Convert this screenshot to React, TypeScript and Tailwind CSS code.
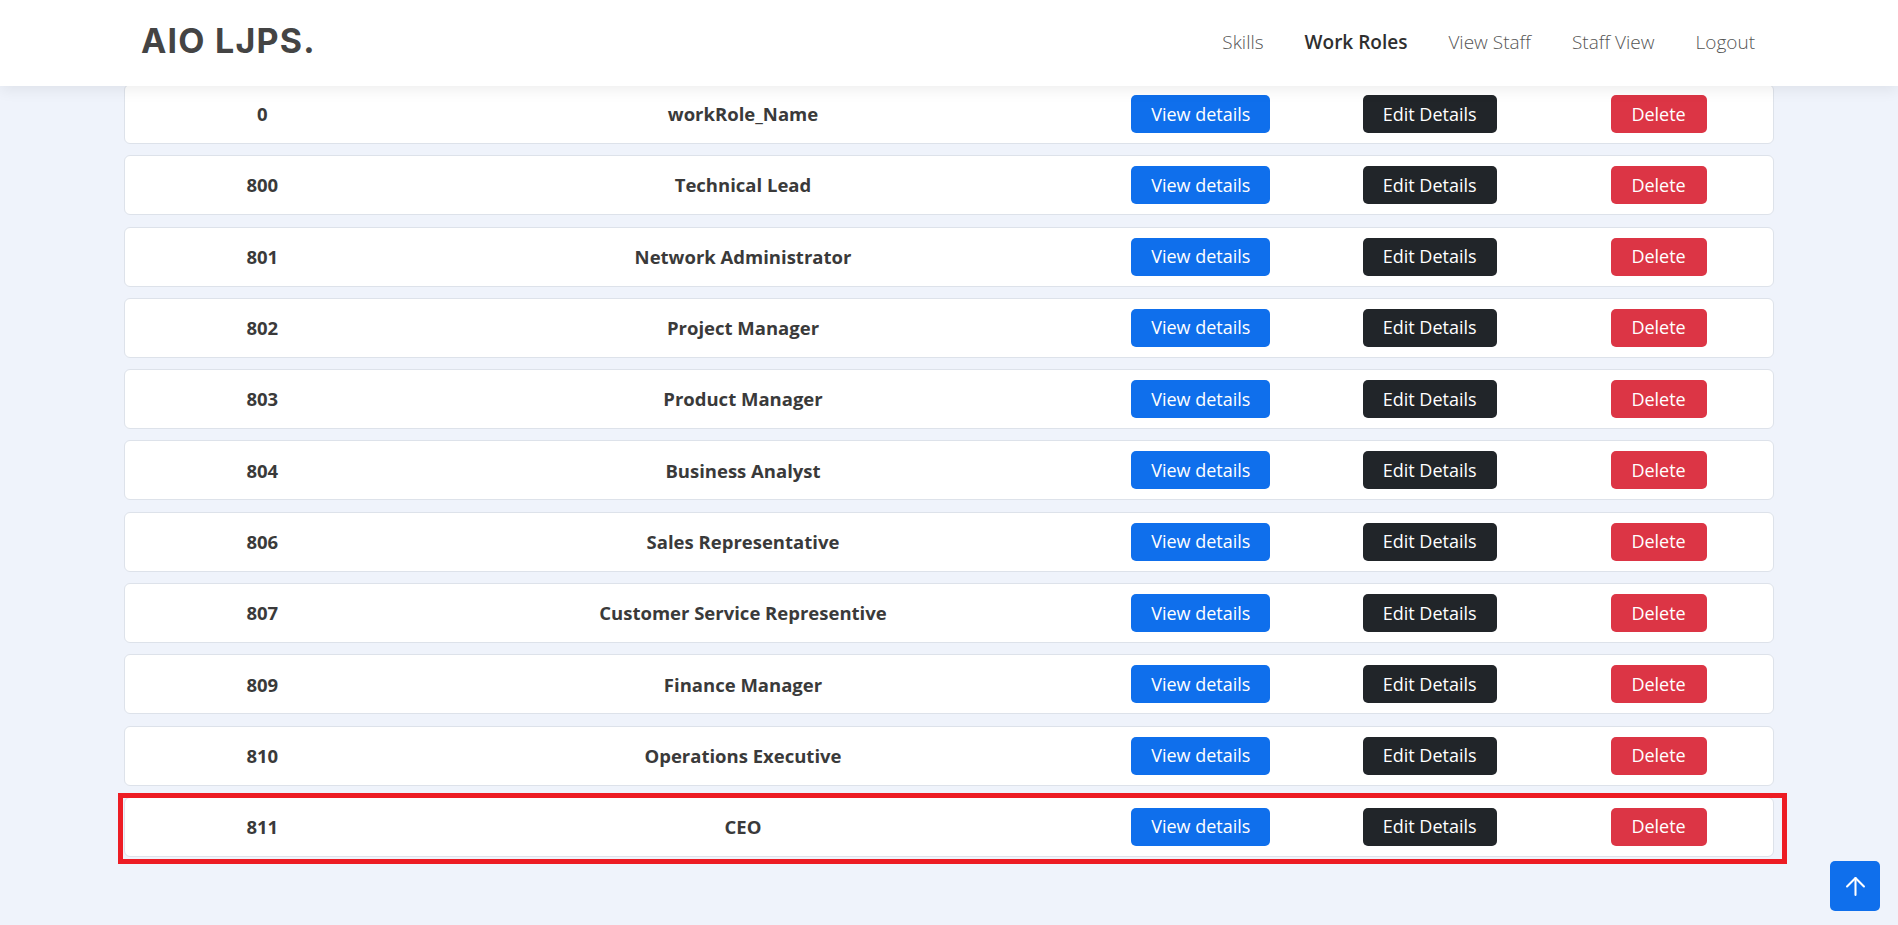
import { ArrowUp } from "lucide-react";

type WorkRole = {
  id: number;
  name: string;
};

const roles: WorkRole[] = [
  { id: 0, name: "workRole_Name" },
  { id: 800, name: "Technical Lead" },
  { id: 801, name: "Network Administrator" },
  { id: 802, name: "Project Manager" },
  { id: 803, name: "Product Manager" },
  { id: 804, name: "Business Analyst" },
  { id: 806, name: "Sales Representative" },
  { id: 807, name: "Customer Service Representive" },
  { id: 809, name: "Finance Manager" },
  { id: 810, name: "Operations Executive" },
  { id: 811, name: "CEO" },
];

const navLinks = ["Skills", "Work Roles", "View Staff", "Staff View", "Logout"];

function Header() {
  return (
    <header className="relative z-10 flex h-[86px] items-center justify-between bg-white pl-[141px] pr-[143px] shadow-[0_4px_14px_rgba(0,0,0,0.07)]">
      <div className="pb-[5px] font-['Inter',sans-serif] text-[34px] font-bold tracking-[1.2px] text-[#444]">
        AIO LJPS.
      </div>
      <nav className="flex items-center gap-[41px] pb-[2px] font-['Open_Sans',sans-serif] text-[19px]">
        {navLinks.map((link) => (
          <a
            key={link}
            className={
              link === "Work Roles"
                ? "font-semibold text-[#2f2f2f]"
                : "font-light text-[#555]"
            }
          >
            {link}
          </a>
        ))}
      </nav>
    </header>
  );
}

function RoleRow({ role, highlighted }: { role: WorkRole; highlighted: boolean }) {
  return (
    <div className="relative">
      <div className="grid h-[60px] grid-cols-[6fr_15fr_5fr_5fr_5fr] items-center rounded-md border border-[#dde2ea] bg-white text-center font-['Open_Sans',sans-serif] text-[18.5px] font-bold text-[#3a3a3a]">
        <div>{role.id}</div>
        <div>{role.name}</div>
        <div className="flex justify-center">
          <button className="h-[38px] w-[139px] rounded-[5px] bg-[#0f6fec] text-[18px] font-normal text-white">
            View details
          </button>
        </div>
        <div className="flex justify-center">
          <button className="h-[38px] w-[134px] rounded-[5px] bg-[#212529] text-[18px] font-normal text-white">
            Edit Details
          </button>
        </div>
        <div className="flex justify-center">
          <button className="h-[38px] w-[96px] rounded-[5px] bg-[#dc3545] text-[18px] font-normal text-white">
            Delete
          </button>
        </div>
      </div>
      {highlighted && (
        <span className="pointer-events-none absolute -bottom-[7px] -left-[6px] -right-[13px] -top-[4px] border-[5px] border-[#ed1c24]" />
      )}
    </div>
  );
}

export default function App() {
  return (
    <div className="min-h-screen bg-[#eff3fb]">
      <Header />
      <main className="-mt-[2px] flex flex-col gap-[11.3px] px-[124px]">
        {roles.map((role, i) => (
          <RoleRow key={role.id} role={role} highlighted={i === roles.length - 1} />
        ))}
      </main>
      <button className="fixed bottom-[14px] right-[18px] flex h-[50px] w-[50px] items-center justify-center rounded-[5px] bg-[#0f6fec] text-white">
        <ArrowUp className="h-[29px] w-[29px]" strokeWidth={1.7} />
      </button>
    </div>
  );
}
